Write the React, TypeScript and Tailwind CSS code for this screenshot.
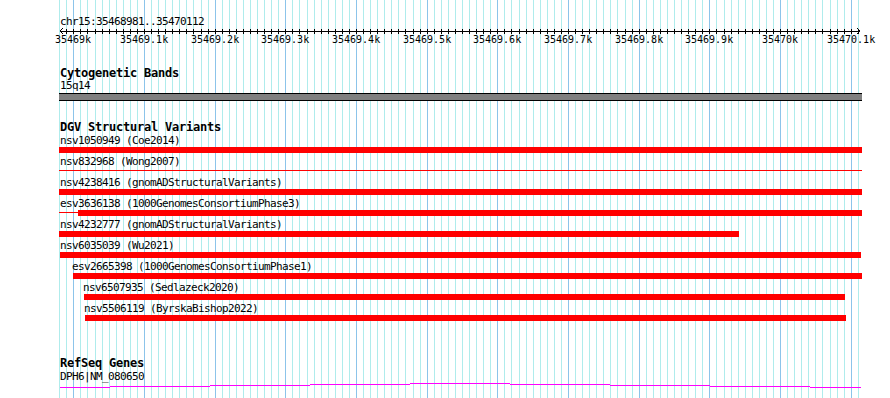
import React from "react";

const START = 35468981;
const END = 35470112;
const PX = 800 / (END - START + 1);

// screen x of a base position
const bpX = (bp: number) => Math.round(59.9 + (bp - START) * PX);

const gridBps: number[] = [];
for (let bp = 35468980; bp <= 35470110; bp += 10) gridBps.push(bp);

const majorBps = gridBps.filter((bp) => bp % 100 === 0);

const tickLabel = (bp: number) =>
  `${(bp / 1000).toFixed(1).replace(/\.0$/, "")}k`;

type Variant = {
  name: string;
  lx: number;
  x: number;
  end: number;
  thin?: boolean;
  thickFrom?: number;
};

const variants: Variant[] = [
  { name: "nsv1050949 (Coe2014)", lx: 60, x: 59, end: 862 },
  { name: "nsv832968 (Wong2007)", lx: 60, x: 59, end: 862, thin: true },
  { name: "nsv4238416 (gnomADStructuralVariants)", lx: 60, x: 59, end: 862 },
  { name: "esv3636138 (1000GenomesConsortiumPhase3)", lx: 60, x: 59, end: 862, thickFrom: 78 },
  { name: "nsv4232777 (gnomADStructuralVariants)", lx: 60, x: 59, end: 739 },
  { name: "nsv6035039 (Wu2021)", lx: 60, x: 60, end: 861 },
  { name: "esv2665398 (1000GenomesConsortiumPhase1)", lx: 72, x: 73, end: 862 },
  { name: "nsv6507935 (Sedlazeck2020)", lx: 83, x: 84, end: 845 },
  { name: "nsv5506119 (ByrskaBishop2022)", lx: 84, x: 85, end: 846 },
];

// intron "hat" of the gene, drawn as 1px steps
const geneSteps = [
  [60, 110, 4],
  [110, 210, 3],
  [210, 310, 2],
  [310, 410, 1],
  [410, 510, 0],
  [510, 610, 1],
  [610, 710, 2],
  [710, 810, 3],
  [810, 861, 4],
];

const Grid = () => (
  <svg
    className="absolute left-0 top-0"
    width={890}
    height={398}
    shapeRendering="crispEdges"
  >
    {gridBps.map((bp) => (
      <rect
        key={bp}
        x={bpX(bp)}
        y={0}
        width={1}
        height={398}
        fill={bp % 100 === 0 ? "#8cc4ea" : "#afecec"}
      />
    ))}
  </svg>
);

const Ruler = () => (
  <div className="relative h-[18px]">
    <svg
      className="absolute left-0 top-0"
      width={890}
      height={8}
      shapeRendering="crispEdges"
    >
      <rect x={60} y={3} width={800} height={1} fill="#000" />
      {gridBps.slice(1).map((bp) => (
        <rect key={bp} x={bpX(bp)} y={1} width={1} height={5} fill="#000" />
      ))}
      <polyline points="63,0 60,3 63,6" fill="none" stroke="#000" />
      <polyline points="857,0 860,3 857,6" fill="none" stroke="#000" />
    </svg>
    {majorBps.map((bp) => {
      const text = tickLabel(bp);
      return (
        <div
          key={bp}
          className="absolute top-[5px] whitespace-nowrap text-[10px] leading-[13px] tracking-normal"
          style={{ left: Math.round(bpX(bp) + 0.5 - text.length * 3.01) }}
        >
          {text}
        </div>
      );
    })}
  </div>
);

const VariantRow = ({ v, first }: { v: Variant; first: boolean }) => (
  <div className={first ? "" : "mt-[2px]"}>
    <div className="h-[13px] whitespace-nowrap leading-[13px]" style={{ marginLeft: v.lx }}>
      {v.name}
    </div>
    <div className="flex h-[6px] items-start" style={{ paddingLeft: v.x }}>
      {v.thin && (
        <div className="mt-[2px] h-px bg-[#ff0000]" style={{ width: v.end - v.x }} />
      )}
      {v.thickFrom !== undefined && (
        <>
          <div className="mt-[2px] h-px bg-[#ff0000]" style={{ width: v.thickFrom - v.x }} />
          <div className="h-[6px] bg-[#ff0000]" style={{ width: v.end - v.thickFrom }} />
        </>
      )}
      {!v.thin && v.thickFrom === undefined && (
        <div className="h-[6px] bg-[#ff0000]" style={{ width: v.end - v.x }} />
      )}
    </div>
  </div>
);

const TrackTitle = ({ children, className }: { children: React.ReactNode; className: string }) => (
  <div
    className={`ml-[60px] whitespace-nowrap text-[12px] font-bold leading-[13px] tracking-[-0.22px] ${className}`}
  >
    {children}
  </div>
);

export default function App() {
  return (
    <div className="relative h-[398px] w-[890px] overflow-hidden bg-white font-['DejaVu_Sans_Mono',monospace] text-[11px] tracking-[-0.62px] text-black">
      <Grid />
      <div className="relative flex flex-col pt-[15px]">
        <div className="ml-[60px] h-[13px] leading-[13px]">chr15:35468981..35470112</div>
        <Ruler />

        <TrackTitle className="mt-[21px] h-[12px]">Cytogenetic Bands</TrackTitle>
        <div className="ml-[60px] h-[13px] leading-[13px]">15q14</div>
        <div className="ml-[59px] mt-px h-[8px] w-[803px] border-y border-black bg-[#808080]" />

        <TrackTitle className="mt-[20px] h-[13px]">DGV Structural Variants</TrackTitle>
        {variants.map((v, i) => (
          <VariantRow key={v.name} v={v} first={i === 0} />
        ))}

        <TrackTitle className="mt-[36px] h-[13px]">RefSeq Genes</TrackTitle>
        <div className="ml-[60px] h-[13px] leading-[13px]">DPH6|NM_080650</div>
        <svg width={890} height={6} shapeRendering="crispEdges">
          {geneSteps.map(([a, b, y]) => (
            <rect key={a} x={a} y={y} width={b - a} height={1} fill="#ff00ff" />
          ))}
        </svg>
      </div>
    </div>
  );
}
